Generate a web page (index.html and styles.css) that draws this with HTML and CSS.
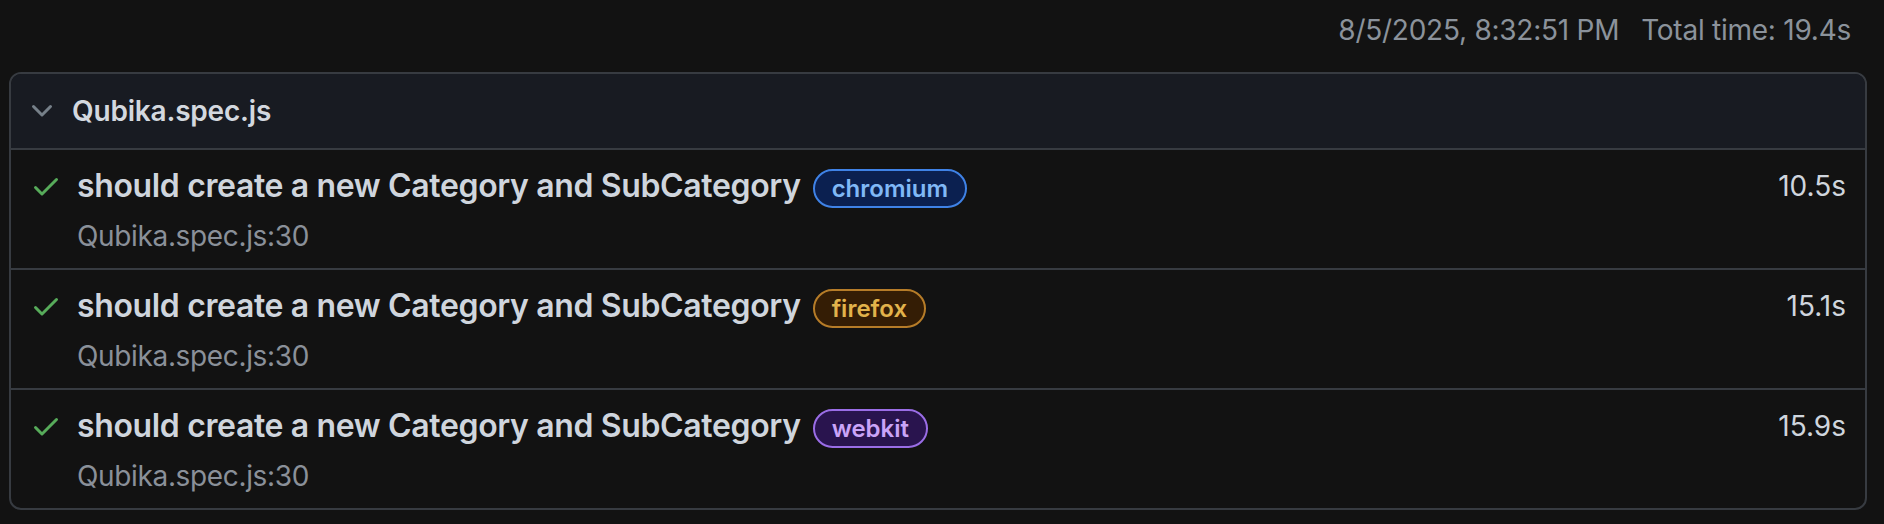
FILE: index.html
```html
<!DOCTYPE html>
<html>
<head>
<meta charset="utf-8">
<link rel="stylesheet" href="styles.css">
</head>
<body>
<div class="page">
  <div class="topbar">
    <span class="stamp">8/5/2025, 8:32:51 PM</span>
    <span class="total">Total time: 19.4s</span>
  </div>
  <div class="file">
    <div class="file-head">
      <svg class="chev" viewBox="0 0 16 16" width="32" height="32"><path fill="currentColor" d="M12.78 5.22a.749.749 0 0 1 0 1.06l-4.25 4.25a.749.749 0 0 1-1.06 0L3.22 6.28a.749.749 0 1 1 1.06-1.06L8 8.939l3.72-3.719a.749.749 0 0 1 1.06 0Z"/></svg>
      <span class="file-name">Qubika.spec.js</span>
    </div>
    <div class="test">
      <svg class="ok" viewBox="0 0 16 16" width="32" height="32"><path fill="currentColor" d="M13.78 4.22a.75.75 0 0 1 0 1.06l-7.25 7.25a.75.75 0 0 1-1.06 0L2.22 9.28a.75.75 0 0 1 1.06-1.06L6 10.94l6.72-6.72a.75.75 0 0 1 1.06 0Z"/></svg>
      <div class="main">
        <div class="title-line">
          <span class="title">should create a new Category and SubCategory</span>
          <span class="tag tag-blue">chromium</span>
        </div>
        <div class="loc">Qubika.spec.js:30</div>
      </div>
      <div class="dur">10.5s</div>
    </div>
    <div class="test">
      <svg class="ok" viewBox="0 0 16 16" width="32" height="32"><path fill="currentColor" d="M13.78 4.22a.75.75 0 0 1 0 1.06l-7.25 7.25a.75.75 0 0 1-1.06 0L2.22 9.28a.75.75 0 0 1 1.06-1.06L6 10.94l6.72-6.72a.75.75 0 0 1 1.06 0Z"/></svg>
      <div class="main">
        <div class="title-line">
          <span class="title">should create a new Category and SubCategory</span>
          <span class="tag tag-yellow">firefox</span>
        </div>
        <div class="loc">Qubika.spec.js:30</div>
      </div>
      <div class="dur">15.1s</div>
    </div>
    <div class="test">
      <svg class="ok" viewBox="0 0 16 16" width="32" height="32"><path fill="currentColor" d="M13.78 4.22a.75.75 0 0 1 0 1.06l-7.25 7.25a.75.75 0 0 1-1.06 0L2.22 9.28a.75.75 0 0 1 1.06-1.06L6 10.94l6.72-6.72a.75.75 0 0 1 1.06 0Z"/></svg>
      <div class="main">
        <div class="title-line">
          <span class="title">should create a new Category and SubCategory</span>
          <span class="tag tag-purple">webkit</span>
        </div>
        <div class="loc">Qubika.spec.js:30</div>
      </div>
      <div class="dur">15.9s</div>
    </div>
  </div>
</div>
</body>
</html>
```

FILE: styles.css
```css
html, body {
  margin: 0;
  padding: 0;
  background: #121212;
}
body {
  font-family: Inter, "Noto Sans", "Liberation Sans", sans-serif;
  color: #cfd5dd;
}
.page {
  padding: 10px 17px 0 9px;
}
.topbar {
  display: flex;
  justify-content: flex-end;
  gap: 22px;
  height: 40px;
  line-height: 40px;
  font-size: 28px;
  letter-spacing: -0.25px;
  color: #8b929b;
  padding-right: 16px;
  margin-bottom: 22px;
}
.file {
  border: 2px solid #373b41;
  border-radius: 12px;
  overflow: hidden;
}
.file-head {
  display: flex;
  align-items: center;
  height: 74px;
  padding-left: 15px;
  background: #181b22;
  border-bottom: 2px solid #373b41;
}
.chev {
  color: #768089;
  margin-right: 14px;
}
.file-name {
  font-size: 28px;
  font-weight: 600;
  letter-spacing: -0.2px;
  color: #d3d8df;
}
.test {
  display: flex;
  align-items: flex-start;
  padding: 14px 19px 16px 19px;
  border-bottom: 2px solid #373b41;
}
.test:last-child {
  border-bottom: none;
}
.ok {
  color: #57ab5a;
  margin-top: 6px;
  margin-right: 15px;
  flex: none;
}
.main {
  flex: 1;
  display: flex;
  flex-direction: column;
}
.title-line {
  display: flex;
  align-items: center;
  height: 44px;
}
.title {
  font-size: 32px;
  font-weight: 600;
  line-height: 44px;
  letter-spacing: -0.36px;
  color: #cfd5dd;
}
.tag {
  display: inline-flex;
  align-items: center;
  box-sizing: border-box;
  height: 39px;
  margin-top: 5px;
  margin-left: 12px;
  padding: 0 17px;
  border-radius: 20px;
  border: 2px solid;
  font-size: 24px;
  font-weight: 600;
}
.tag-blue {
  background: #0b2050;
  border-color: #3f82e6;
  color: #80b8f6;
}
.tag-yellow {
  background: #341d05;
  border-color: #b67c28;
  color: #e2b34b;
}
.tag-purple {
  background: #29144e;
  border-color: #9a6de6;
  color: #caa4f8;
}
.loc {
  margin-top: 12px;
  font-size: 28px;
  line-height: 32px;
  letter-spacing: -0.35px;
  color: #8a9099;
}
.dur {
  flex: none;
  font-size: 28px;
  line-height: 44px;
  color: #cfd5dd;
}
```
